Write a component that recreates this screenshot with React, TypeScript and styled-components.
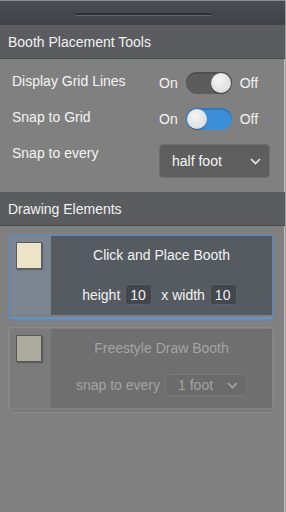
import React from 'react';
import styled, { createGlobalStyle } from 'styled-components';

const GlobalStyle = createGlobalStyle`
  html, body {
    margin: 0;
    padding: 0;
    background: #808080;
  }
  * {
    box-sizing: border-box;
  }
`;

const Panel = styled.div`
  width: 286px;
  height: 512px;
  background-color: #808080;
  border-right: 1px solid #9a9a9a;
  box-shadow: inset -1px 0 0 #c2c2c2;
  font-family: 'Liberation Sans', Arial, sans-serif;
  overflow: hidden;
`;
const TopBar = styled.div`
  display: flex;
  align-items: center;
  justify-content: center;
  height: 25px;
  border-top: 1px solid #8c8e92;
  background: linear-gradient(#4a4d53, #3f4247);
`;
const Handle = styled.div`
  width: 136px;
  height: 2px;
  margin-top: 1px;
  background-color: #2e3135;
  box-shadow: 0 1px 0 #62656b;
`;
const SectionHeader = styled.div`
  display: flex;
  align-items: center;
  height: 34px;
  padding-left: 8px;
  background-color: #5b5c5f;
  border-bottom: 1px solid #4b4c4e;
  color: #f2f2f2;
  font-size: 14px;
`;
const Settings = styled.div`
  display: flex;
  flex-direction: column;
  gap: 12px;
  padding: 11px 16px 14px 12px;
`;
const Row = styled.div`
  display: grid;
  grid-template-columns: 147px 1fr;
  align-items: start;
  min-height: 22px;
`;
const Label = styled.div`
  color: #f4f4f4;
  font-size: 14px;
  line-height: 22px;
`;
const ToggleGroup = styled.div`
  display: flex;
  align-items: center;
  gap: 8px;
  margin-top: 2px;
  color: #f4f4f4;
  font-size: 14px;
`;
const Track = styled.div<{ on: boolean }>`
  position: relative;
  width: 46px;
  height: 22px;
  border-radius: 11px;
  background-color: ${(p) => (p.on ? '#3a8fd8' : '#5c5c5c')};
  box-shadow: inset 0 2px 0 ${(p) => (p.on ? '#2f79bb' : '#4e4e4e')};
`;
const Knob = styled.div<{ on: boolean }>`
  position: absolute;
  top: 1px;
  left: ${(p) => (p.on ? '1px' : '25px')};
  width: 20px;
  height: 20px;
  border-radius: 50%;
  background: radial-gradient(circle at 40% 35%, #f4f4f4 0%, #e2e2e2 60%, #cfcfcf 100%);
  box-shadow: 0 1px 1px rgba(0, 0, 0, 0.35);
`;
const Select = styled.div<{ width: number; height: number; dim?: boolean }>`
  display: flex;
  flex-shrink: 0;
  align-items: center;
  justify-content: space-between;
  width: ${(p) => p.width}px;
  height: ${(p) => p.height}px;
  margin-top: ${(p) => (p.dim ? 0 : 2)}px;
  padding: 0 8px 0 12px;
  border: 1px solid ${(p) => (p.dim ? '#797979' : '#6e6e6e')};
  border-radius: 4px;
  background-color: ${(p) => (p.dim ? '#6b6b6b' : '#5e5e5e')};
  color: ${(p) => (p.dim ? '#a3a3a3' : '#f4f4f4')};
  font-size: 14px;
`;
const Cards = styled.div`
  display: flex;
  flex-direction: column;
  gap: 7px;
  padding: 8px 11px 0 8px;
`;
const Card = styled.div<{ active?: boolean }>`
  display: flex;
  height: 86px;
  padding: 1px 1px 4px 1px;
  border: 1px solid ${(p) => (p.active ? '#4a90d9' : '#8c8c8c')};
  border-radius: 5px;
  box-shadow: inset 0 -2px 0 ${(p) => (p.active ? '#6f8fb4' : '#7a7a7a')};
`;
const SwatchColumn = styled.div<{ active?: boolean }>`
  width: 41px;
  padding: 6px 0 0 6px;
  background-color: ${(p) => (p.active ? '#7b8591' : '#7b7b7b')};
  border-radius: 3px 0 0 3px;
`;
const Swatch = styled.div<{ color: string }>`
  width: 26px;
  height: 27px;
  background-color: ${(p) => p.color};
  border: 1px solid #5a5a5a;
  box-shadow: 1px 1px 1px rgba(0, 0, 0, 0.25);
`;
const CardBody = styled.div<{ active?: boolean }>`
  flex: 1;
  display: flex;
  flex-direction: column;
  align-items: center;
  padding-top: 11px;
  gap: ${(p) => (p.active ? 21 : 18)}px;
  background-color: ${(p) => (p.active ? '#565a61' : '#6f6f6f')};
  color: ${(p) => (p.active ? '#f2f2f2' : '#a4a4a4')};
  font-size: 14px;
`;
const CardTitle = styled.div`
  line-height: 16px;
`;
const SizeRow = styled.div`
  display: flex;
  align-items: center;
  gap: 5px;
`;
const NumberBox = styled.div`
  display: flex;
  align-items: center;
  width: 27px;
  height: 21px;
  padding-left: 4px;
  margin-right: 4px;
  border: 1px solid #5d6066;
  border-radius: 3px;
  background-color: #43464b;
  color: #f2f2f2;
  font-size: 14px;
`;

const Chevron = ({ color }: { color: string }) => (
  <svg width="11" height="7" viewBox="0 0 11 7">
    <path d="M1 1l4.5 4.5L10 1" fill="none" stroke={color} strokeWidth="1.6" />
  </svg>
);

const Toggle = ({ on }: { on: boolean }) => (
  <ToggleGroup>
    <span>On</span>
    <Track on={on}>
      <Knob on={on} />
    </Track>
    <span>Off</span>
  </ToggleGroup>
);

const App: React.FC = () => {
  return (
    <Panel>
      <GlobalStyle />
      <TopBar>
        <Handle />
      </TopBar>
      <SectionHeader>Booth Placement Tools</SectionHeader>
      <Settings>
        <Row>
          <Label>Display Grid Lines</Label>
          <Toggle on={false} />
        </Row>
        <Row>
          <Label>Snap to Grid</Label>
          <Toggle on={true} />
        </Row>
        <Row>
          <Label>Snap to every</Label>
          <Select width={111} height={34}>
            <span>half foot</span>
            <Chevron color="#e6e6e6" />
          </Select>
        </Row>
      </Settings>
      <SectionHeader>Drawing Elements</SectionHeader>
      <Cards>
        <Card active>
          <SwatchColumn active>
            <Swatch color="#ece4c7" />
          </SwatchColumn>
          <CardBody active>
            <CardTitle>Click and Place Booth</CardTitle>
            <SizeRow>
              <span>height</span>
              <NumberBox>10</NumberBox>
              <span>x width</span>
              <NumberBox>10</NumberBox>
            </SizeRow>
          </CardBody>
        </Card>
        <Card>
          <SwatchColumn>
            <Swatch color="#adac9c" />
          </SwatchColumn>
          <CardBody>
            <CardTitle>Freestyle Draw Booth</CardTitle>
            <SizeRow>
              <span>snap to every</span>
              <Select width={82} height={22} dim>
                <span>1 foot</span>
                <Chevron color="#a6a6a6" />
              </Select>
            </SizeRow>
          </CardBody>
        </Card>
      </Cards>
    </Panel>
  );
};

export default App;
